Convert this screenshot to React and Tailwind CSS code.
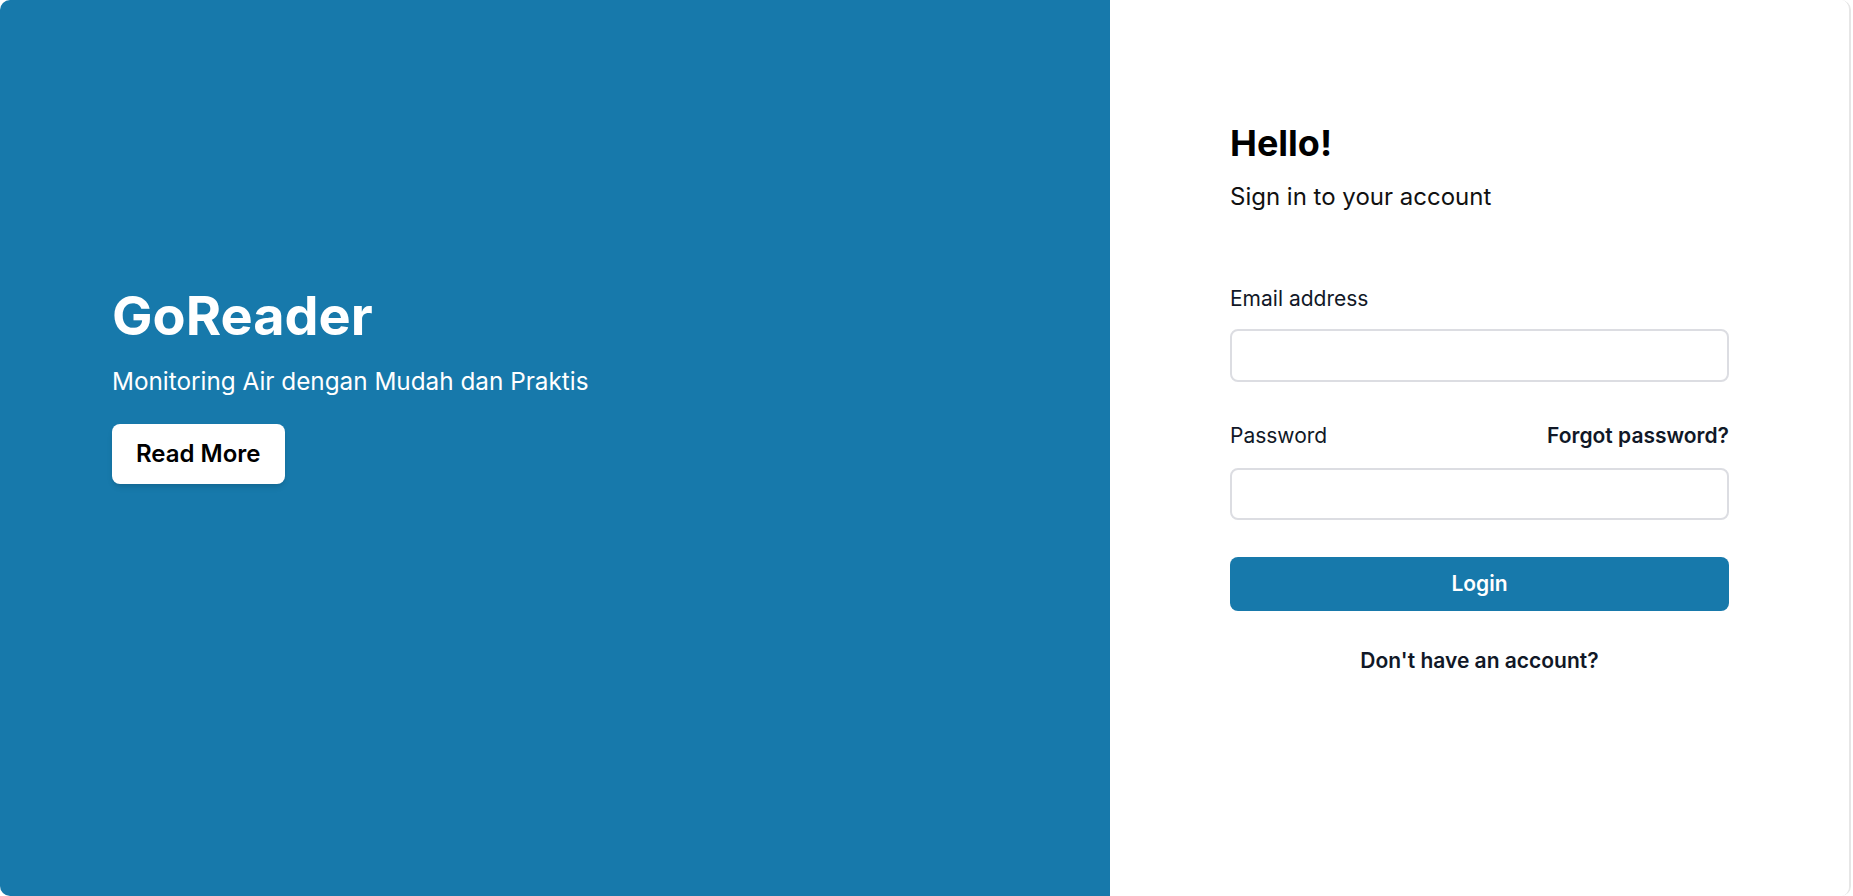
export default function App() {
    return (
        <main
            className="h-screen w-full bg-white"
            style={{ fontFamily: "Inter, 'Noto Sans', sans-serif" }}
        >
            <div className="flex h-full w-[1851px] overflow-hidden rounded-[10px] border-r-2 border-[#e6e6e6]">
                {/* left: brand */}
                <section className="flex w-[1110px] shrink-0 flex-col items-start bg-[#1779ab] pl-[112px] pt-[289px]">
                    <h1 className="text-[54px] font-bold leading-none text-white">GoReader</h1>
                    <p className="mt-[22px] text-[24.3px] leading-8 text-white">
                        Monitoring Air dengan Mudah dan Praktis
                    </p>
                    <button
                        type="button"
                        className="mt-[27px] rounded-lg bg-white px-6 py-3.5 text-2xl font-semibold leading-8 text-black shadow-md"
                    >
                        Read More
                    </button>
                </section>

                {/* right: sign in */}
                <section className="flex flex-1 flex-col bg-white pl-[120px] pt-[123px]">
                    <div className="flex w-[499px] flex-col">
                        <h2 className="text-4xl font-bold text-black">Hello!</h2>
                        <p className="mt-[18px] text-2xl leading-8 text-[#111]">Sign in to your account</p>

                        <label className="mt-[72px] text-[21px] leading-7 text-[#111827]">Email address</label>
                        <input
                            type="email"
                            className="mt-4 h-[53px] w-full rounded-lg border-2 border-[#dcdde2] bg-white px-3 text-xl outline-none"
                        />

                        <div className="mt-10 flex items-center justify-between">
                            <label className="text-[21px] leading-7 text-[#111827]">Password</label>
                            <a href="#" className="text-[21px] font-semibold leading-7 text-[#111827]">
                                Forgot password?
                            </a>
                        </div>
                        <input
                            type="password"
                            className="mt-[18px] h-[52px] w-full rounded-lg border-2 border-[#dcdde2] bg-white px-3 text-xl outline-none"
                        />

                        <button
                            type="button"
                            className="mt-[37px] h-[54px] w-full rounded-lg bg-[#1779ab] text-[21px] font-semibold text-white"
                        >
                            Login
                        </button>

                        <a href="#" className="mt-[36px] text-center text-[21px] font-semibold leading-7 text-[#111827]">
                            Don't have an account?
                        </a>
                    </div>
                </section>
            </div>
        </main>
    );
}
